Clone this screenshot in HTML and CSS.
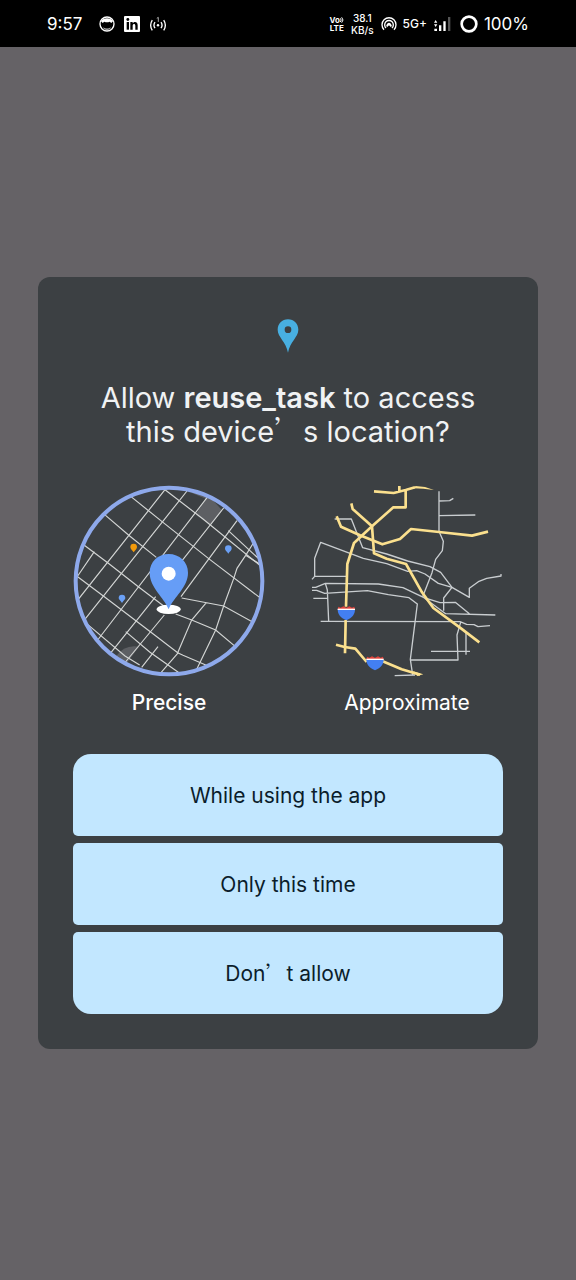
FILE: index.html
```html
<!DOCTYPE html>
<html lang="en">
<head>
<meta charset="utf-8">
<meta name="viewport" content="width=device-width, initial-scale=1">
<title>Location permission</title>
<link rel="stylesheet" href="styles.css">
</head>
<body>
<header class="status">
  <div class="status-left">
    <span class="time">9:57</span>
    <svg class="ico16" viewBox="0 0 48 48" aria-hidden="true"><circle cx="24" cy="24" r="21" fill="none" stroke="#fff" stroke-width="4"/><path d="M6 16C12 4 36 4 42 16L37 21L32 17Q24 21 16 17L11 21Z" fill="#fff"/><path d="M12 34Q24 41 36 34L33 40Q24 44 15 40Z" fill="#aaa"/></svg>
    <svg class="ico16" viewBox="0 0 48 48" aria-hidden="true"><rect width="48" height="48" rx="3" fill="#fff"/><path d="M8 18h7v23H8z" fill="#000"/><circle cx="11.500" cy="10.500" r="4.300" fill="#000"/><path d="M19 18h7v4c3-6 15-7 15 6v13h-7V29c0-7-8-6-8 0v12h-7z" fill="#000"/></svg>
    <svg class="ico-cast" viewBox="0 0 60 54" aria-hidden="true"><g fill="none" stroke="#fff" stroke-width="4.500"><path d="M11 14Q0 31 11 48M20 21Q13 31 20 41M49 14Q60 31 49 48M40 21Q47 31 40 41"/><path d="M26 8l5-3v15" stroke="#bbb" stroke-width="3"/></g><circle cx="30" cy="31" r="4" fill="#fff"/></svg>
  </div>
  <div class="status-right">
    <div class="volte"><span class="vo">Vo<svg class="waves" viewBox="0 0 12 18" aria-hidden="true"><path d="M1 4Q6 9 1 15M5 1Q13 9 5 17" fill="none" stroke="#fff" stroke-width="3"/></svg></span><span>LTE</span></div>
    <div class="rate"><span>38.1</span><span>KB/s</span></div>
    <svg class="ico16 hotspot" viewBox="0 0 48 48" aria-hidden="true"><g fill="none" stroke="#fff" stroke-width="4"><path d="M9 41A21 21 0 1 1 39 41"/><path d="M15 36A13 13 0 1 1 33 36"/></g><path d="M18 34A8 8 0 1 1 30 34L24 28Z" fill="#fff"/></svg>
    <span class="net">5G+</span>
    <svg class="signal" viewBox="0 0 54 48" aria-hidden="true"><path d="M4 38h8v7H4zM18 28h7v17h-7zM31 16h7v29h-7z" fill="#fff"/><path d="M45 3h7v42h-7z" fill="#555"/><path d="M3 20l5-8 5 8zM3 25l5 8 5-8z" fill="#fff"/></svg>
    <svg class="battery" viewBox="0 0 54 54" aria-hidden="true"><circle cx="27" cy="27" r="22" fill="none" stroke="#fff" stroke-width="8"/></svg>
    <span class="percent">100%</span>
  </div>
</header>
<main class="backdrop">
  <section class="dialog" role="dialog" aria-labelledby="title">
    <svg class="pin" viewBox="0 0 66 102" aria-hidden="true"><path fill-rule="evenodd" fill="#48afe1" d="M33 1C15 1 2 14 2 32C2 54 27 68 33 101C39 68 64 54 64 32C64 14 51 1 33 1ZM33 22A10 10 0 1 1 33 42A10 10 0 1 1 33 22Z"/></svg>
    <h1 class="title" id="title">Allow <strong>reuse_task</strong> to access this device<span class="wide" lang="zh-CN">’</span>s location?</h1>
    <div class="choices">
      <button class="choice chosen" type="button" aria-pressed="true">
        <svg class="map" viewBox="10 15 576 576" aria-hidden="true">
          <clipPath id="disc"><circle cx="298" cy="303" r="280"/></clipPath>
          <g clip-path="url(#disc)">
            <path d="M365 38H410L458 92L424 135L378 104L410 57Z" fill="#5d5f63"/>
            <path d="M138 530Q165 492 208 500L172 548Z" fill="#5d5f63"/>
            <g fill="none" stroke="#d3d5d4" stroke-width="3.500">
              <path d="M286 29L10 378M352 33L36 430M412 53L84 480M462 84L326 256M258 350L122 520M502 122L334 350M284 405L160 555"/>
              <path d="M74 215L24 288M265 500L216 562M326 518L272 580"/>
              <path d="M286 29L400 117L590 272M184 50L280 127L420 238L580 360M105 104L180 168L260 232M42 194L116 250L206 320L290 384M18 286L104 350L240 454L324 518L340 526L410 556M50 430L166 528L210 555M168 455L240 516L330 580"/>
              <path d="M476 152L580 248M553 186L528 226L502 265L492 296L462 378L438 450L380 570M528 226L580 258"/>
              <path d="M336 354L462 378L560 432M318 402L366 420L438 450L500 502M410 368L366 420L324 518"/>
            </g>
          </g>
          <circle cx="298" cy="303" r="280" fill="none" stroke="#8ea9eb" stroke-width="12"/>
          <path d="M192 217C187 209 182 207 182 201A10 10 0 0 1 202 201C202 207 197 209 192 217Z" fill="#f29a0b"/>
          <path id="dot" d="M157 369C152 361 147 359 147 354A10 10 0 0 1 167 354C167 359 162 361 157 369Z" fill="#6ba0f5"/>
          <use href="#dot" x="319" y="-148"/>
          <ellipse cx="297" cy="388" rx="36" ry="14" fill="#fff"/>
          <path d="M297 222C265 222 240 246 240 278C240 323 282 350 297 388C312 350 355 323 355 278C355 246 329 222 297 222Z" fill="#669df6"/>
          <circle cx="297" cy="281" r="21" fill="#fff"/>
        </svg>
        <span>Precise</span>
      </button>
      <button class="choice" type="button" aria-pressed="false">
        <svg class="map" viewBox="33 15 576 576" aria-hidden="true">
          <g fill="none" stroke="#c9cdd0" stroke-width="4" stroke-linejoin="round">
            <path d="M417 34V154L430 184L427 212L407 238L396 278L368 350M417 63L449 62L460 55M417 107L526 105"/>
            <path d="M104 117H154L188 203L260 222L323 243L390 260L422 277L456 322L508 352V325L535 305L560 295L603 288V282"/>
            <path d="M36 298L44 289V235L62 187L190 235L260 251L323 274L350 272L375 282L415 310L456 322L431 354V392M44 289H138"/>
            <path d="M36 322H47L76 310L235 312L309 323L372 353L437 401L586 405M372 353L420 368L466 367L508 401"/>
            <path d="M36 331H50L74 340L202 332L265 344L327 353L352 372L331 538L338 585M76 310L82 330L86 424M40 355H83"/>
            <path d="M62 424L480 425L500 433L522 434L534 440L570 437M482 427L471 465L474 540H331M498 455V524M393 514H510M284 587L345 585"/>
          </g>
          <g fill="none" stroke="#fbe08e" stroke-width="8" stroke-linejoin="round">
            <path d="M222 34L281 39L317 30L345 22M298 18V35M317 30V82H280L216 139L162 189L142 252L138 380M137 420L135 520"/>
            <path d="M154 70L158 87L216 139L222 220L260 236L318 252L366 337L400 384L480 443L538 487"/>
            <path d="M110 109L123 140L180 166L247 193L300 177L333 147L417 156L516 167L564 155"/>
            <path d="M108 494L134 501L166 506L200 546M248 544L305 568L360 584"/>
          </g>
          <path d="M339 25L347 18L375 21L402 30L370 26ZM338 573L370 583L352 588Z" fill="#fbe08e"/>
          <g id="shield"><path d="M113 387H165C165 404 157 413 139 421C121 413 113 404 113 387Z" fill="#437ff2"/><path d="M113 389L115 380L122 383L130 379L139 383L148 379L156 383L163 380L165 389Z" fill="#e5443b"/><path d="M113 388H165" stroke="#fff" stroke-width="4"/></g>
          <use href="#shield" x="86" y="150"/>
        </svg>
        <span>Approximate</span>
      </button>
    </div>
    <div class="actions">
      <button class="action" type="button">While using the app</button>
      <button class="action" type="button">Only this time</button>
      <button class="action" type="button">Don<span class="wide" lang="zh-CN">’</span>t allow</button>
    </div>
  </section>
</main>
</body>
</html>
```
FILE: styles.css
```css
* { box-sizing: border-box; }
body {
  margin: 0;
  min-height: 100vh;
  display: flex;
  flex-direction: column;
  background: #656266;
  color: #f0f2f3;
  font-family: Inter, "Noto Sans CJK SC", sans-serif;
}
button { font: inherit; border: 0; cursor: pointer; }
svg { display: block; flex: none; }

.status {
  height: 47px;
  padding: 0 47px;
  display: flex;
  align-items: center;
  justify-content: space-between;
  background: #000;
  color: #fff;
}
.status-left, .status-right { display: flex; align-items: center; }
.status-left { gap: 9px; }
.status-right { gap: 6px; }
.time { font-size: 17px; margin-right: 8px; }
.ico16 { width: 16px; height: 16px; }
.ico-cast { width: 18px; height: 18px; }
.volte, .rate { display: flex; flex-direction: column; align-items: center; }
.volte { font-size: 8px; line-height: 8px; font-weight: 700; }
.vo { display: flex; align-items: center; }
.waves { width: 4px; height: 6px; }
.rate { font-size: 10px; line-height: 12px; font-weight: 500; margin: 0 1px; }
.net { font-size: 12px; font-weight: 500; }
.signal { width: 18px; height: 16px; }
.battery { width: 18px; height: 18px; margin-left: 3px; }
.percent { font-size: 17px; }

.backdrop {
  flex: 1;
  display: flex;
  align-items: center;
  justify-content: center;
  padding: 0 38px 2px;
}
.dialog {
  width: 100%;
  max-width: 560px;
  padding: 42px 35px 35px;
  border-radius: 12px;
  background: #3c4043;
  display: flex;
  flex-direction: column;
}
.pin { width: 22px; height: 34px; align-self: center; }
.title {
  margin: 28px 0 36px;
  padding: 0 20px;
  font-size: 29px;
  line-height: 34px;
  font-weight: 400;
  text-align: center;
}
.title strong { font-weight: 600; }
.wide { font-family: "Noto Sans CJK SC", sans-serif; font-weight: 300; line-height: 1; }
.choices { display: flex; justify-content: space-between; }
.choice {
  padding: 0;
  background: none;
  color: #fff;
  display: flex;
  flex-direction: column;
  align-items: center;
  gap: 14px;
  font-size: 21px;
  line-height: 24px;
  font-weight: 400;
}
.chosen { font-weight: 500; }
.map { width: 192px; height: 192px; }
.actions {
  margin-top: 39px;
  display: flex;
  flex-direction: column;
  gap: 7px;
}
.action {
  height: 82px;
  padding: 3px 16px 0;
  border-radius: 5px;
  background: #c2e7ff;
  color: #0b1d2b;
  font-size: 21px;
  line-height: 28px;
  font-weight: 400;
}
.action:first-child { border-radius: 18px 18px 5px 5px; }
.action:last-child { border-radius: 5px 5px 18px 18px; }
```
